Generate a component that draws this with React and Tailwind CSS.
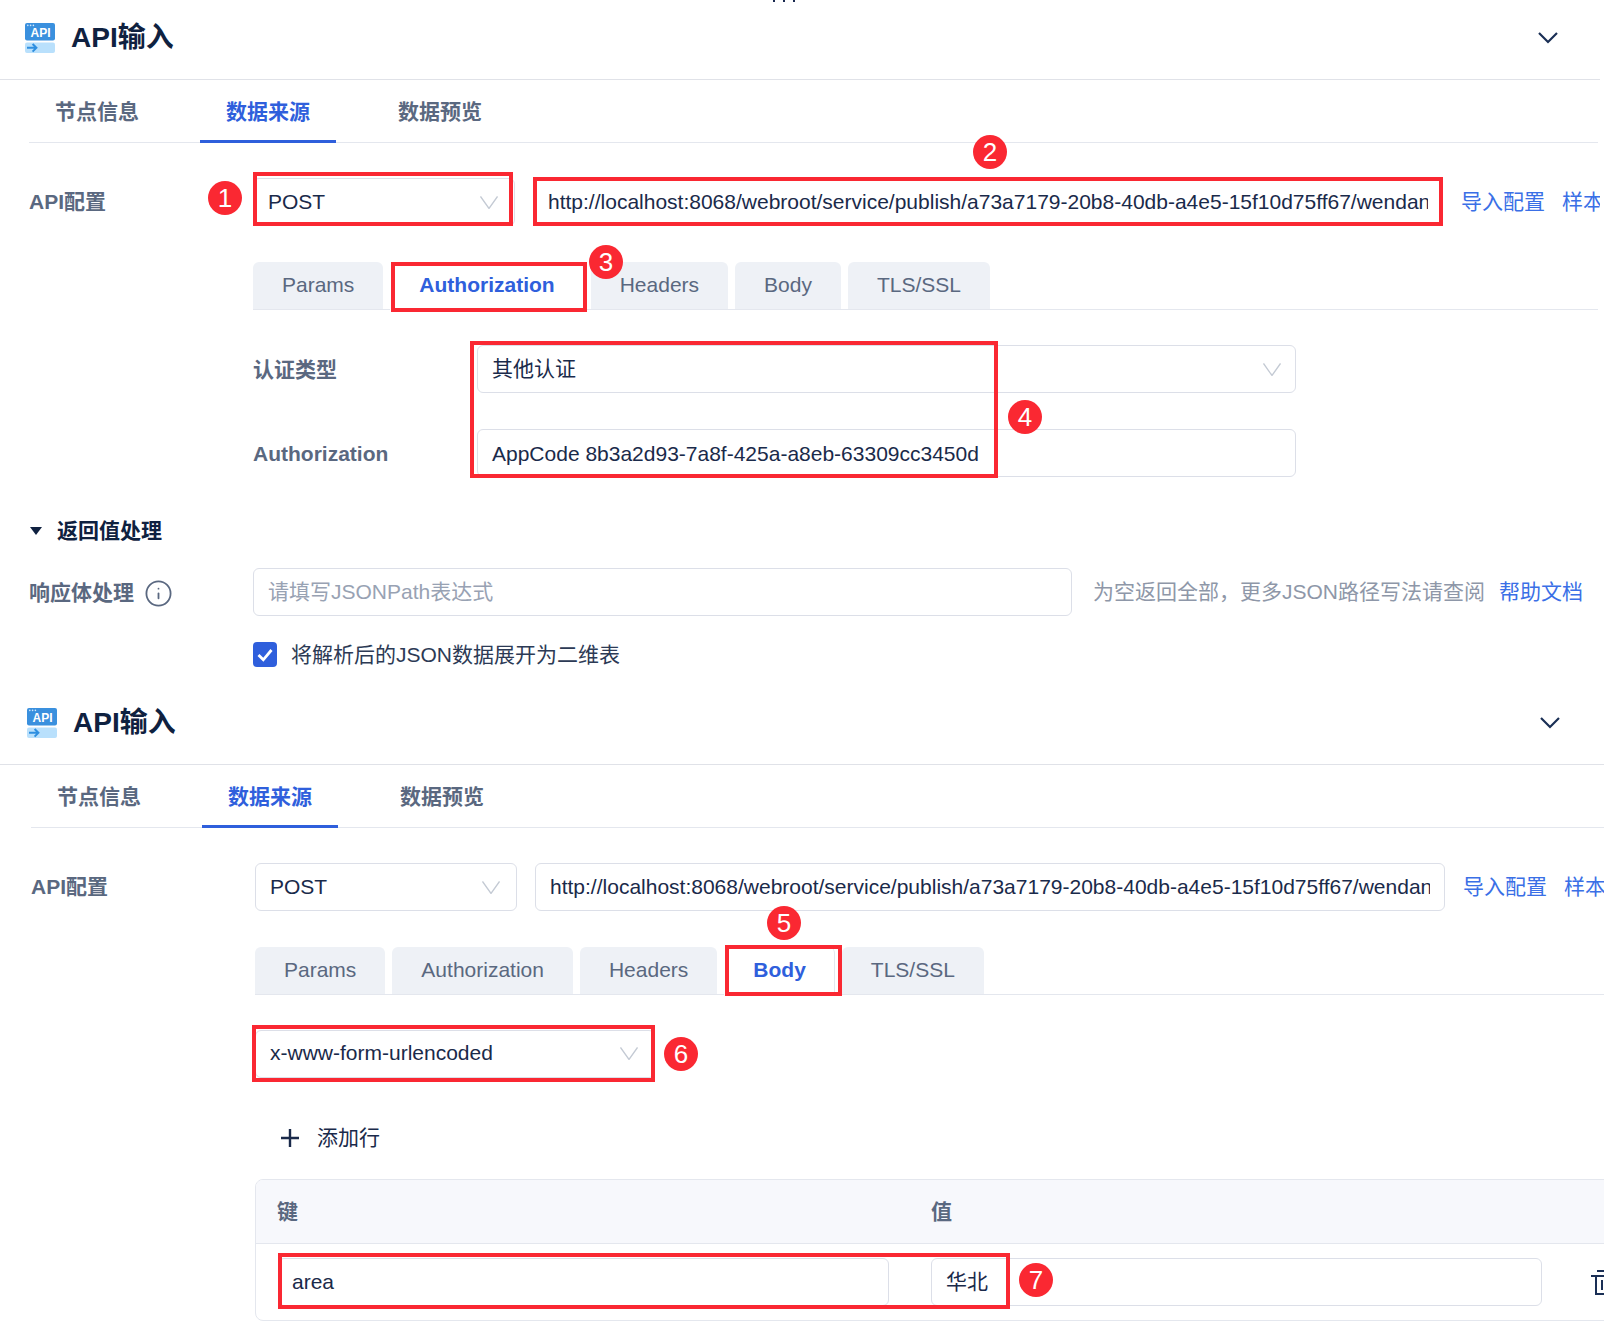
import { Info } from 'lucide-react';

const URL = 'http://localhost:8068/webroot/service/publish/a73a7179-20b8-40db-a4e5-15f10d75ff67/wendang';

function ApiIcon() {
  return (
    <svg width="30" height="30" viewBox="0 0 30 30" className="shrink-0">
      <rect x="0" y="0" width="30" height="17.5" rx="2" fill="#3a90de" />
      <circle cx="2.8" cy="2.4" r="0.8" fill="#cfe6fb" />
      <circle cx="5.6" cy="2.4" r="0.8" fill="#cfe6fb" />
      <circle cx="8.4" cy="2.4" r="0.8" fill="#cfe6fb" />
      <text x="15.5" y="14" textAnchor="middle" fontSize="12" fontWeight="700" fill="#fff" fontFamily="Liberation Sans">API</text>
      <rect x="0" y="19.5" width="30" height="10.5" rx="2" fill="#b9e0fc" />
      <path d="M2 24.8h9.5M7.6 21l3.8 3.8-3.8 3.8" fill="none" stroke="#2f8fe0" strokeWidth="2" />
    </svg>
  );
}

function Chevron() {
  return (
    <svg width="20" height="12" viewBox="0 0 20 12" className="shrink-0">
      <path d="M1 1l9 9 9-9" fill="none" stroke="#1a2f55" strokeWidth="2.2" />
    </svg>
  );
}

function SelectArrow() {
  return (
    <svg width="18" height="13" viewBox="0 0 18 13" className="shrink-0">
      <path d="M0.5 0.5L9 12.5 17.5 0.5" fill="none" stroke="#c4cad4" strokeWidth="1.3" />
    </svg>
  );
}

function Select({ value, className }) {
  return (
    <div className={`h-[48px] shrink-0 flex items-center justify-between pl-[14px] border border-[#dcdfe8] rounded-md bg-white text-[#1a2a4a] ${className}`}>
      <span>{value}</span>
      <SelectArrow />
    </div>
  );
}

function Field({ children, className }) {
  return (
    <div className={`h-[48px] shrink-0 flex items-center border border-[#dcdfe8] rounded-md bg-white text-[#1a2a4a] ${className}`}>
      {children}
    </div>
  );
}

function Red({ className }) {
  return <div className={`absolute border-4 border-[#fa2832] pointer-events-none ${className}`} />;
}

function Badge({ n, className }) {
  return (
    <div className={`absolute w-[34px] h-[34px] rounded-full bg-[#fa2832] text-white text-[26px] flex items-center justify-center ${className}`}>
      {n}
    </div>
  );
}

function SubTabs({ active }) {
  return (
    <div className="mt-[36px] ml-[253px] h-[48px] flex items-start gap-[7px] border-b border-[#e4e7ee]">
      {['Params', 'Authorization', 'Headers', 'Body', 'TLS/SSL'].map((t) =>
        t === active ? (
          <div key={t} className="h-[48px] pl-[29px] pr-[28px] pb-[2px] flex items-center font-bold text-[#2f5fdc] bg-white border-r border-[#e4e7ee] rounded-t-md">
            {t}
          </div>
        ) : (
          <div key={t} className="h-[47px] px-[29px] pb-[2px] flex items-center text-[#5a6880] bg-[#eef1f6] rounded-t-md">
            {t}
          </div>
        )
      )}
    </div>
  );
}

function PanelTop({ wrapClass, active }) {
  return (
    <div className={wrapClass}>
      <div className="ml-[29px] h-[63px] flex gap-[35px] border-b border-[#e4e7ee] font-bold text-[#5a6880]">
        <div className="w-[136px] h-[63px] flex items-center justify-center">节点信息</div>
        <div className="w-[136px] h-[63px] pt-[3px] flex items-center justify-center text-[#2f5fdc] border-b-[3px] border-[#2f5fdc]">数据来源</div>
        <div className="w-[136px] h-[63px] ml-[1px] flex items-center justify-center">数据预览</div>
      </div>
      <div className="mt-[35px] ml-[29px] flex items-center whitespace-nowrap">
        <div className="w-[224px] shrink-0 font-bold text-[#5a6880]">API配置</div>
        <Select value="POST" className="w-[262px] pr-[16px]" />
        <Field className="w-[910px] ml-[18px] px-[14px]">
          <div className="overflow-hidden">{URL}</div>
        </Field>
        <span className="ml-[18px] shrink-0 text-[#3a6fe6]">导入配置</span>
        <span className="ml-[17px] shrink-0 text-[#3a6fe6]">样本数据</span>
      </div>
      <SubTabs active={active} />
    </div>
  );
}

function Header({ className }) {
  return (
    <div className={`h-[80px] pb-[4px] flex items-center justify-between border-b border-[#e0e2e8] ${className}`}>
      <div className="flex items-center gap-4 text-[28px] font-bold text-[#0f2140]">
        <ApiIcon />
        <span>API输入</span>
      </div>
      <Chevron />
    </div>
  );
}

function AuthPanel() {
  return (
    <section className="relative w-[1600px] h-[685px] overflow-hidden">
      <div className="absolute left-[773px] top-0 flex gap-2">
        <span className="w-[2px] h-[2px] bg-[#1a2a50]" />
        <span className="w-[2px] h-[2px] bg-[#1a2a50]" />
        <span className="w-[2px] h-[2px] bg-[#1a2a50]" />
      </div>
      <Header className="pl-[25px] pr-[42px]" />
      <PanelTop wrapClass="pr-[2px]" active="Authorization" />

      <div className="mt-[35px] ml-[253px] flex flex-col gap-[36px]">
        <div className="flex items-center">
          <div className="w-[224px] pt-[2px] font-bold text-[#5a6880]">认证类型</div>
          <Select value="其他认证" className="w-[819px] pr-[14px]" />
        </div>
        <div className="flex items-center">
          <div className="w-[224px] pt-[2px] font-bold text-[#5a6880]">Authorization</div>
          <Field className="w-[819px] px-[14px] pt-[2px]">AppCode 8b3a2d93-7a8f-425a-a8eb-63309cc3450d</Field>
        </div>
      </div>

      <div className="mt-[40px] ml-[30px] h-[28px] flex items-center text-[#0f2140] font-bold">
        <svg width="12" height="8" viewBox="0 0 12 8" className="shrink-0">
          <path d="M0 0h12L6 8z" fill="#0f2140" />
        </svg>
        <span className="ml-[15px]">返回值处理</span>
      </div>

      <div className="mt-[23px] ml-[29px] flex items-center whitespace-nowrap">
        <div className="w-[224px] shrink-0 pt-[2px] flex items-center font-bold text-[#5a6880]">
          <span>响应体处理</span>
          <Info size={29} strokeWidth={1.5} className="ml-[10px] text-[#5a6880]" />
        </div>
        <Field className="w-[819px] px-[14px] text-[#98a2b3]">请填写JSONPath表达式</Field>
        <span className="ml-[21px] text-[#8e97a8]">为空返回全部，更多JSON路径写法请查阅</span>
        <span className="ml-[14px] text-[#3a6fe6]">帮助文档</span>
      </div>

      <div className="mt-[23px] ml-[253px] flex items-center text-[#2c3a55]">
        <div className="w-[24px] h-[25px] rounded bg-[#2f5fdc] flex items-center justify-center">
          <svg width="16" height="14" viewBox="0 0 16 14">
            <path d="M1.5 7l4.8 4.8L14.5 2" fill="none" stroke="#fff" strokeWidth="2.8" />
          </svg>
        </div>
        <span className="ml-[14px]">将解析后的JSON数据展开为二维表</span>
      </div>

      <Red className="left-[253px] top-[172px] w-[260px] h-[54px]" />
      <Badge n="1" className="left-[208px] top-[181px]" />
      <Red className="left-[533px] top-[177px] w-[910px] h-[49px]" />
      <Badge n="2" className="left-[973px] top-[135px]" />
      <Red className="left-[391px] top-[262px] w-[196px] h-[50px]" />
      <Badge n="3" className="left-[589px] top-[245px]" />
      <Red className="left-[470px] top-[341px] w-[528px] h-[137px]" />
      <Badge n="4" className="left-[1008px] top-[400px]" />
    </section>
  );
}

function BodyPanel() {
  return (
    <section className="relative w-[1604px] h-[640px] overflow-hidden">
      <Header className="pl-[27px] pr-[44px]" />
      <PanelTop wrapClass="pl-[2px]" active="Body" />

      <div className="pl-[2px]">
        <Select value="x-www-form-urlencoded" className="mt-[35px] ml-[253px] w-[400px] pr-[16px] pb-[2px]" />

        <div className="mt-[46px] ml-[279px] h-[28px] flex items-center text-[#1a2a4a]">
          <svg width="18" height="18" viewBox="0 0 18 18" className="shrink-0">
            <path d="M9 0v18M0 9h18" fill="none" stroke="#1a2a4a" strokeWidth="2.4" />
          </svg>
          <span className="ml-[18px]">添加行</span>
        </div>

        <div className="mt-[27px] ml-[253px] w-[1400px] border border-[#e4e7ee] rounded-lg overflow-hidden">
          <div className="h-[64px] flex items-center bg-[#f7f8fc] border-b border-[#e4e7ee] font-bold text-[#5a6880]">
            <div className="ml-[21px] w-[654px]">键</div>
            <div>值</div>
          </div>
          <div className="pt-[14px] pb-[14px] pl-[22px] flex items-center text-[#1a2a4a]">
            <Field className="w-[611px] px-[13px]">area</Field>
            <Field className="w-[611px] ml-[42px] px-[14px]">华北</Field>
            <svg width="28" height="25" viewBox="0 0 28 25" className="ml-[49px] shrink-0">
              <path d="M0 6h28M6 1h14v5M5 6v18h18V6M11 10v10M17 10v10" fill="none" stroke="#1a2f55" strokeWidth="2" />
            </svg>
          </div>
        </div>
      </div>

      <Red className="left-[725px] top-[260px] w-[117px] h-[51px]" />
      <Badge n="5" className="left-[767px] top-[221px]" />
      <Red className="left-[252px] top-[340px] w-[403px] h-[57px]" />
      <Badge n="6" className="left-[664px] top-[352px]" />
      <Red className="left-[278px] top-[568px] w-[732px] h-[56px]" />
      <Badge n="7" className="left-[1019px] top-[578px]" />
    </section>
  );
}

export default function App() {
  return (
    <div className="w-[1604px] h-[1325px] overflow-hidden bg-white text-[21px] font-['Liberation_Sans','Noto_Sans_CJK_SC',sans-serif]">
      <AuthPanel />
      <BodyPanel />
    </div>
  );
}
